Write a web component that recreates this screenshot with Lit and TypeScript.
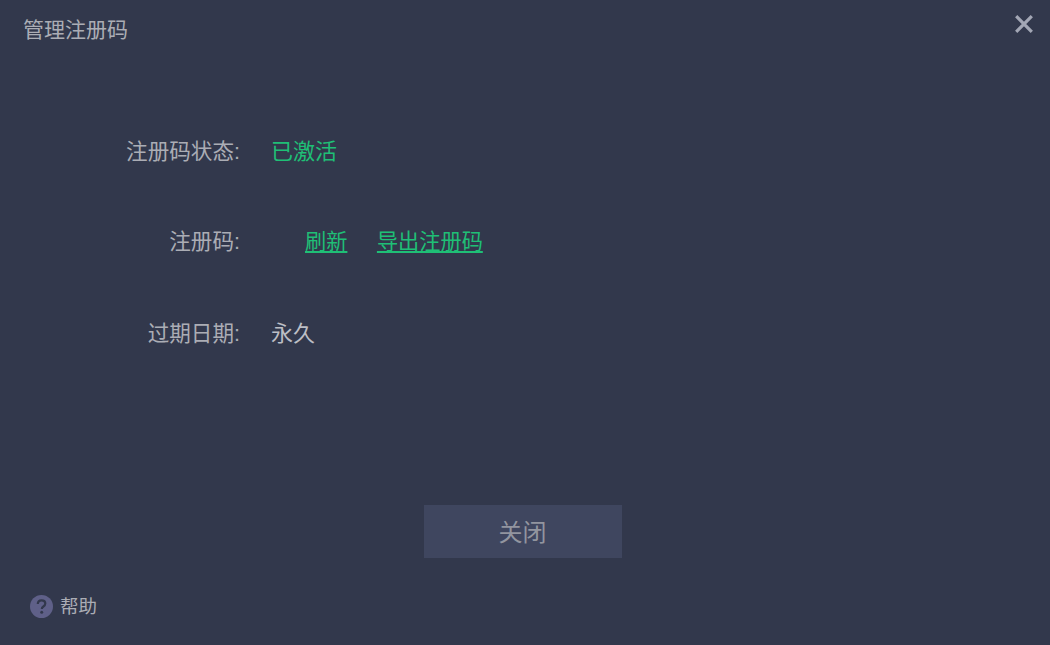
import { LitElement, html, css } from "lit";
import { customElement } from "lit/decorators.js";

@customElement("app-root")
export class AppRoot extends LitElement {
  static styles = css`
    :host {
      display: flex;
      flex-direction: column;
      width: 1050px;
      height: 645px;
      overflow: hidden;
      background: #32384c;
      color: #abadb5;
      font-family: "Liberation Sans", "Noto Sans CJK SC", sans-serif;
      font-size: 21px;
      line-height: 30px;
    }
    .head {
      display: flex;
      justify-content: space-between;
      align-items: flex-start;
      padding: 15px 16px 0 23px;
    }
    .close { display: block; width: 20px; height: 20px; margin-top: -1px; }
    .rows {
      display: flex;
      flex-direction: column;
      gap: 61px;
      margin-top: 92px;
    }
    .row { display: flex; align-items: center; height: 30px; }
    .row.mid { margin-top: -1px; margin-bottom: 1px; }
    .label { width: 240px; text-align: right; flex: none; font-size: 21.6px; }
    .value { margin-left: 31px; font-size: 22px; }
    .ok { color: #1fbf76; }
    .value.bright { color: #bcbec5; }
    .links { display: flex; gap: 29.5px; margin-left: 65px; font-size: 21.2px; }
    .links a { color: #1fbf76; text-decoration: underline; text-underline-offset: 2px; }
    .footer { display: flex; justify-content: center; margin-top: 156px; padding-right: 4px; }
    .btn {
      width: 198px;
      height: 53px;
      border: 0;
      padding: 2px 1px 0 0;
      background: #3f465f;
      color: #92959f;
      font: inherit;
      font-size: 24px;
    }
    .help {
      display: flex;
      align-items: center;
      gap: 7px;
      margin: 32px 0 0 30px;
      font-size: 18.5px;
      line-height: 30px;
    }
    .help svg { display: block; width: 23px; height: 23px; }
    .help span { padding-top: 2px; }
  `;

  render() {
    return html`
      <div class="head">
        <span>管理注册码</span>
        <svg class="close" viewBox="0 0 20 20" aria-label="close">
          <path d="M2.2 2.2L17.8 17.8M17.8 2.2L2.2 17.8" stroke="#a3a7b5" stroke-width="3.2" fill="none" />
        </svg>
      </div>
      <div class="rows">
        <div class="row"><span class="label">注册码状态:</span><span class="value ok">已激活</span></div>
        <div class="row mid">
          <span class="label">注册码:</span>
          <span class="links"><a>刷新</a><a>导出注册码</a></span>
        </div>
        <div class="row"><span class="label">过期日期:</span><span class="value bright">永久</span></div>
      </div>
      <div class="footer"><button class="btn">关闭</button></div>
      <div class="help">
        <svg viewBox="0 0 23 23">
          <circle cx="11.5" cy="11.5" r="11.5" fill="#5f6088" />
          <path d="M7.8 9c0-2.3 1.7-3.6 3.8-3.6s3.7 1.2 3.7 3.2c0 1.5-.9 2.2-1.9 2.9-1 .7-1.6 1.2-1.6 2.5" stroke="#32384c" stroke-width="2.2" fill="none" />
          <circle cx="11.7" cy="17.3" r="1.5" fill="#32384c" />
        </svg>
        <span>帮助</span>
      </div>
    `;
  }
}
